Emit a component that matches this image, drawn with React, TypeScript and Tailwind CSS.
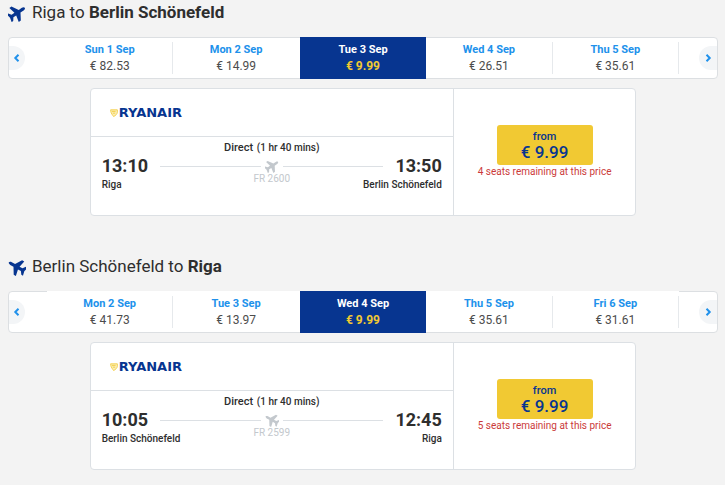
import { FC } from "react";
import clsx from "clsx";

interface Fare {
  day: string;
  price: string;
}

interface Flight {
  from: string;
  to: string;
  departure: string;
  arrival: string;
  flightNo: string;
  seats: number;
  inbound: boolean;
  fares: Fare[];
}

const SELECTED = 2;

const flights: Flight[] = [
  {
    from: "Riga",
    to: "Berlin Schönefeld",
    departure: "13:10",
    arrival: "13:50",
    flightNo: "FR 2600",
    seats: 4,
    inbound: false,
    fares: [
      { day: "Sun 1 Sep", price: "€ 82.53" },
      { day: "Mon 2 Sep", price: "€ 14.99" },
      { day: "Tue 3 Sep", price: "€ 9.99" },
      { day: "Wed 4 Sep", price: "€ 26.51" },
      { day: "Thu 5 Sep", price: "€ 35.61" },
    ],
  },
  {
    from: "Berlin Schönefeld",
    to: "Riga",
    departure: "10:05",
    arrival: "12:45",
    flightNo: "FR 2599",
    seats: 5,
    inbound: true,
    fares: [
      { day: "Mon 2 Sep", price: "€ 41.73" },
      { day: "Tue 3 Sep", price: "€ 13.97" },
      { day: "Wed 4 Sep", price: "€ 9.99" },
      { day: "Thu 5 Sep", price: "€ 35.61" },
      { day: "Fri 6 Sep", price: "€ 31.61" },
    ],
  },
];

const Plane: FC<{ inbound: boolean; className: string }> = ({ inbound, className }) => (
  <svg viewBox="0 0 24 24" fill="currentColor" className={className} aria-hidden="true">
    <path
      transform={inbound ? "rotate(-60 12 12)" : "rotate(56 12 12)"}
      d="M12-.5c-1.200 0-2.100 1.500-2.100 3.300v5L.8 13.400v3.300l9.100-2v4.500l-4 3v2.500l6.100-1.500 6.100 1.500v-2.500l-4-3v-4.500l9.100 2v-3.300l-9.100-5.600v-5C14.100 1 13.200-.5 12-.5z"
    />
  </svg>
);

const Chevron: FC<{ left?: boolean }> = ({ left }) => (
  <svg viewBox="0 0 8 8" className="h-2 w-2" fill="none" stroke="currentColor" strokeWidth="2" aria-hidden="true">
    <path d={left ? "M5.5 0.8L2.3 4l3.2 3.2" : "M2.5 0.8L5.7 4 2.5 7.2"} />
  </svg>
);

const Logo: FC = () => (
  <div className="flex items-center gap-px text-[#073590]">
    <svg viewBox="0 0 10 10" className="h-2 w-2" fill="none" stroke="#f1c933" aria-hidden="true">
      <path d="M.8 1h8.400v3C9 6.500 7 8 4.500 9.500 3.500 7.500.8 6 .8 1z" fill="#fbeeb8" />
      <path d="M2.500 3h4.500M3.500 5.200h3" />
    </svg>
    <span className="font-['DejaVu_Sans',sans-serif] text-[13px] leading-4 font-bold">RYANAIR</span>
  </div>
);

const FareCarousel: FC<{ fares: Fare[]; inbound: boolean }> = ({ fares, inbound }) => (
  <div className="flex items-stretch rounded border border-[#dcdfe2] bg-white">
    <div className="flex w-[38px] shrink-0 items-center">
      <button
        type="button"
        aria-label="Previous days"
        className="flex h-6 w-4 items-center justify-center rounded-r-full bg-[#f3f5f7] text-[#2091eb]"
      >
        <Chevron left />
      </button>
    </div>
    {fares.map(({ day, price }, i) => {
      const selected = i === SELECTED;
      return (
        <button
          key={day}
          type="button"
          aria-pressed={selected}
          className={clsx(
            "flex flex-1 items-center",
            selected && "-my-px bg-[#073590] py-1",
            !selected && inbound && "-mt-px bg-white pt-[5px] pb-1",
            !selected && !inbound && "py-1"
          )}
        >
          <span
            className={clsx(
              "flex-1 text-center",
              !selected && "border-r",
              i === SELECTED - 1 ? "border-transparent" : "border-[#e6e9ec]"
            )}
          >
            <span
              className={clsx("block text-[11px] leading-4 font-bold", selected ? "text-white" : "text-[#2091eb]")}
            >
              {day}
            </span>
            <span
              className={clsx("block text-xs leading-4", selected ? "font-bold text-[#f1c933]" : "text-[#4c4c4c]")}
            >
              {price}
            </span>
          </span>
        </button>
      );
    })}
    <div className="flex w-[38px] shrink-0 items-center justify-end">
      <button
        type="button"
        aria-label="Next days"
        className="flex h-6 w-[18px] items-center justify-center rounded-l-full bg-[#f3f5f7] text-[#2091eb]"
      >
        <Chevron />
      </button>
    </div>
  </div>
);

const FlightCard: FC<{ flight: Flight }> = ({ flight }) => (
  <div className="mx-auto mt-[9px] flex w-[77%] rounded border border-[#dce0e4] bg-white">
    <div className="flex-1 border-r border-[#dce0e4]">
      <div className="flex h-12 items-center border-b border-[#dce0e4] pl-[19px]">
        <Logo />
      </div>
      <div className="h-[78px] px-[11px] pt-1 text-[#2e2e2e]">
        <p className="text-center text-[11px] leading-[14px] font-medium">
          Direct <span className="pl-px text-[10px]">(1 hr 40 mins)</span>
        </p>
        {/* Departure, route line and arrival */}
        <div className="flex items-center">
          <span className="text-lg leading-[22px] font-bold">{flight.departure}</span>
          <span className="mr-1 ml-3 h-px flex-1 bg-[#dce0e4]" />
          <Plane inbound={flight.inbound} className="h-[14px] w-[14px] text-[#c3c8cd]" />
          <span className="mr-3 ml-1 h-px flex-1 bg-[#dce0e4]" />
          <span className="text-lg leading-[22px] font-bold">{flight.arrival}</span>
        </div>
        <div className="grid grid-cols-[1fr_auto_1fr] text-[10px] font-medium">
          <span className="pt-px leading-[14px]">{flight.from}</span>
          <span className="-mt-[3px] leading-[10px] font-normal text-[#c3c8cd]">{flight.flightNo}</span>
          <span className="pt-px text-right leading-[14px]">{flight.to}</span>
        </div>
      </div>
    </div>
    <div className="flex w-1/3 flex-col items-center justify-center">
      <button type="button" className="h-10 w-24 rounded-[3px] bg-[#f1c933] font-medium text-[#073590]">
        <span className="block text-[11px] leading-[13px]">from</span>
        <span className="block text-[17px] leading-[18px]">€ 9.99</span>
      </button>
      <p className="text-[10px] leading-[14px] text-[#cb3a3a]">{flight.seats} seats remaining at this price</p>
    </div>
  </div>
);

const App: FC = () => (
  <main className="flex min-h-screen flex-col gap-[38px] bg-[#f3f3f3] pr-[7px] pl-2 font-['Roboto',sans-serif]">
    {flights.map((flight) => (
      <section key={flight.flightNo}>
        <h2 className="mb-3 flex h-[25px] items-center gap-[6px] text-[17px] font-normal text-[#2e2e2e]">
          <Plane inbound={flight.inbound} className="h-[18px] w-[18px] text-[#073590]" />
          <span>
            {flight.from} to <b className="font-bold">{flight.to}</b>
          </span>
        </h2>
        <FareCarousel fares={flight.fares} inbound={flight.inbound} />
        <FlightCard flight={flight} />
      </section>
    ))}
  </main>
);

export default App;
